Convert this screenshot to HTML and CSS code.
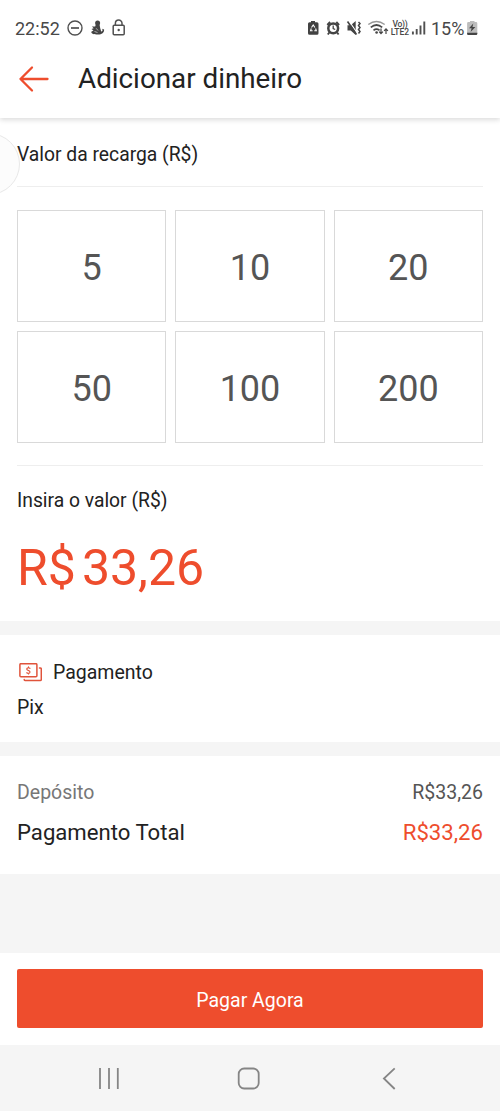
FILE: index.html
```html
<!DOCTYPE html>
<html lang="pt-BR">
<head>
<meta charset="utf-8">
<title>Adicionar dinheiro</title>
<link rel="stylesheet" href="styles.css">
</head>
<body>
<div class="screen">
  <header class="top">
    <div class="status">
      <span class="clock">22:52</span>
      <svg class="status-left" width="62" height="22" viewBox="65 17 62 22">
        <circle cx="75" cy="28" r="7" fill="none" stroke="#505050" stroke-width="1.4"/>
        <path d="M71 28h8" stroke="#505050" stroke-width="1.7"/>
        <circle cx="97.600" cy="23" r="2.500" fill="#444"/>
        <path d="M95.800 24.500h3.700l.8 4 1 3.200 1.400-1.500-.6-1.500 2 .8c.2 3.300-2.300 5.100-6 5.100-4.200 0-7-.8-6.800-2.500.1-1 1.500-1.200 2.200-1.700l-2-1.400 2.200-.8-1.800-1.600 3.300-.2z" fill="#444"/>
        <path d="M96.200 28.300l1.800 2.200M94.500 31.500l3 1" stroke="#ccc" stroke-width=".8"/>
        <rect x="113.200" y="25.200" width="11" height="9.500" rx="1" fill="none" stroke="#505050" stroke-width="1.5"/>
        <path d="M115.400 25v-1.700a3.300 3.300 0 0 1 6.600 0V25" fill="none" stroke="#505050" stroke-width="1.500"/>
        <circle cx="118.700" cy="30" r="1.200" fill="#505050"/>
      </svg>
      <svg class="status-right" width="82" height="22" viewBox="307 17 82 22">
        <path d="M311 21h4v1.200h2q1.500 0 1.500 1.500v9.500q0 1.500-1.500 1.500h-7.500q-1.500 0-1.500-1.500v-9.500q0-1.500 1.500-1.500h1.500z" fill="#424242"/>
        <path d="M311.500 27.500l1.700-2.500 1.700 2.500M315.600 28.500l.7 2.200h-2M312.600 30.700h-2l.7-2.200" fill="none" stroke="#fff" stroke-width="1.100"/>
        <circle cx="333.200" cy="28.300" r="4.900" fill="none" stroke="#444" stroke-width="2.500"/>
        <path d="M327.300 25l2.800-3M339.100 25l-2.800-3M329.300 32.500l-1.500 2M337.100 32.500l1.500 2" stroke="#444" stroke-width="1.900"/>
        <path d="M333.200 25.500v3l2 1" fill="none" stroke="#444" stroke-width="1.300"/>
        <path d="M347.500 25.300h3.200l5-4.300v14l-5-4.500h-3.200z" fill="#444"/>
        <path d="M349 21l8.500 12.500" stroke="#fff" stroke-width="1.300"/>
        <path d="M347.500 21.500l9 13" stroke="#444" stroke-width="1.600"/>
        <path d="M358.500 22l1.500 1.500-1.500 2 1.500 2-1.500 2 1.500 2-1.500 2" fill="none" stroke="#444" stroke-width="1.500"/>
        <path d="M368.300 24.500q8.200-6.200 16.400 0" fill="none" stroke="#999" stroke-width="1.500"/>
        <path d="M370.800 27.300q5.700-4.600 11.400 0M373.500 30.300q3-2.500 6 0" fill="none" stroke="#484848" stroke-width="1.700"/>
        <circle cx="376.600" cy="32.500" r="1.300" fill="#444"/>
        <path d="M381 28.500v5m-1.900-1.800 1.900 2 1.900-2M386 34v-5m-1.900 1.800 1.900-2 1.900 2" fill="none" stroke="#444" stroke-width="1.200"/>
      </svg>
      <span class="volte"><span class="vo">Vo))</span><span>LTE2</span></span>
      <svg class="signal" width="16" height="16" viewBox="411 20 16 16">
        <path d="M412.900 31.500v3M416.700 29v5.500M420.500 25.500v9M424.300 21.500v13" stroke="#505050" stroke-width="1.900"/>
      </svg>
      <span class="percent">15%</span>
      <svg class="battery" width="12" height="16" viewBox="466 20 12 16">
        <path d="M470 21h4.500v1h1.500q1.300 0 1.300 1.300v10.400q0 1.200-1.300 1.200h-7.600q-1.300 0-1.300-1.200V23.300q0-1.300 1.300-1.300h1.600z" fill="#bdbdbd"/>
        <path d="M467.100 32.800h10.200v.9q0 1.200-1.300 1.200h-7.600q-1.300 0-1.300-1.200z" fill="#444"/>
        <path d="M473.300 23.500l-4.300 4.700h2.600l-1 3.800 4.800-5h-2.900z" fill="#444"/>
      </svg>
    </div>
    <div class="title-bar">
      <svg class="back" width="32" height="28" viewBox="18 65 32 28" fill="none" stroke="#ee4d2d" stroke-width="2.300" stroke-linecap="round" stroke-linejoin="round"><path d="M47.500 79H20.500M32 67.500L20.500 79 32 90.500"/></svg>
      <h1 class="title">Adicionar dinheiro</h1>
    </div>
  </header>

  <main>
    <section class="topup">
      <span class="edge-handle"></span>
      <h2 class="label label-top">Valor da recarga (R$)</h2>
      <div class="amounts">
        <button class="amount">5</button>
        <button class="amount">10</button>
        <button class="amount">20</button>
        <button class="amount">50</button>
        <button class="amount">100</button>
        <button class="amount">200</button>
      </div>
      <h2 class="label label-value">Insira o valor (R$)</h2>
      <div class="value"><span>R$</span><span>33,26</span></div>
    </section>

    <section class="payment">
      <div class="method">
        <svg class="cash" width="24" height="20" viewBox="18 662 24 20" fill="none" stroke="#e0533b" stroke-width="1.500" stroke-linecap="round" stroke-linejoin="round">
          <rect x="19.900" y="662.700" width="17" height="13" rx="1"/>
          <path d="M39.500 667h.8q1 0 1 1v10.500q0 1-1 1H25q-.8 0-.8-1"/>
          <path d="M29.900 667.300q-1.600-1.100-2.800 0-.9 1.200.8 2l1 .5q1.600.8.700 2-1.200 1.200-2.900 0M28.500 665.900v.6M28.500 672.300v.6" stroke-width="1.200"/>
        </svg>
        <span>Pagamento</span>
      </div>
      <div class="pix">Pix</div>
    </section>

    <section class="totals">
      <div class="row deposit"><span>Depósito</span><span class="deposit-value">R$33,26</span></div>
      <div class="row total"><span>Pagamento Total</span><span class="total-value">R$33,26</span></div>
    </section>
  </main>

  <footer class="footer"><button class="pay">Pagar Agora</button></footer>
  <nav class="nav">
    <svg width="24" height="24" viewBox="97 1067 24 24" stroke="#858585" stroke-width="1.800"><path d="M100 1068v21M109 1068v21M117.800 1068v21"/></svg>
    <svg width="24" height="24" viewBox="237 1067 24 24" fill="none" stroke="#858585" stroke-width="1.800"><rect x="238.700" y="1068.500" width="20" height="20" rx="5.500"/></svg>
    <svg width="24" height="24" viewBox="377 1067 24 24" fill="none" stroke="#858585" stroke-width="1.800"><path d="M394.700 1068.300L383.900 1078.500 394.700 1089"/></svg>
  </nav>
</div>
</body>
</html>
```
FILE: styles.css
```css
* { box-sizing: border-box; }
body { margin: 0; background: #f5f5f5; font-family: Roboto, "Liberation Sans", sans-serif; color: #222; }
svg { display: block; flex: none; }
h1, h2 { margin: 0; font-weight: 400; }
button { font: inherit; margin: 0; padding: 0; }

.screen { width: 500px; height: 1111px; display: flex; flex-direction: column; overflow: hidden; }
main { flex: 1; }

.top { height: 118px; background: #fff; box-shadow: 0 2px 5px rgba(0, 0, 0, .14); position: relative; z-index: 1; }
.status { display: flex; align-items: center; height: 56px; padding: 0 22px 0 15px; color: #484848; font-size: 18px; }
.clock { width: 50px; }
.status-right { margin-left: auto; }
.volte { display: flex; flex-direction: column; align-items: center; width: 20px; margin-left: 1px; font-size: 8.500px; font-weight: 500; line-height: 8px; }
.vo { letter-spacing: -.3px; }
.signal { margin-left: 1px; }
.percent { width: 35px; margin-left: 4px; }
.title-bar { display: flex; align-items: center; height: 46px; padding-left: 18px; }
.title { margin-left: 28px; font-size: 27.800px; line-height: 32px; }

.topup { height: 503px; padding: 0 17px; background: #fff; position: relative; }
.edge-handle { position: absolute; left: -42px; top: 15px; width: 62px; height: 62px; border: 1px solid #e8e8e8; border-radius: 50%; background: #fcfcfc; }
.label { font-size: 19.300px; line-height: 24px; position: relative; }
.label-top { height: 69px; padding-top: 25px; border-bottom: 1px solid #eee; }
.amounts { display: grid; grid-template-columns: repeat(3, 1fr); grid-auto-rows: 112px; gap: 9px; height: 279px; padding-top: 23px; border-bottom: 1px solid #eee; }
.amount { border: 1px solid #d9d9d9; background: #fff; color: #555; font-size: 36px; padding-top: 3px; }
.label-value { padding-top: 23px; }
.value { display: flex; gap: 6px; margin-top: 25px; font-size: 50px; line-height: 60px; color: #ee4d2d; }

.payment { height: 107px; margin-top: 14px; padding: 26px 17px 0; background: #fff; font-size: 19.500px; line-height: 24px; }
.method { display: flex; align-items: center; gap: 11px; padding-left: 1px; }
.pix { margin-top: 11px; }

.totals { height: 118px; margin-top: 14px; padding: 25px 17px 0; background: #fff; }
.row { display: flex; justify-content: space-between; }
.deposit { font-size: 19.500px; line-height: 24px; color: #777; }
.deposit-value { color: #555; }
.total { margin-top: 13px; font-size: 22.150px; line-height: 28px; }
.total-value { color: #ee4d2d; }

.footer { height: 92px; padding: 16px 17px; background: #fff; }
.pay { display: block; width: 100%; height: 59px; border: 0; border-radius: 2px; background: #ee4d2d; color: #fff; font-size: 19.500px; padding-top: 3px; }
.nav { display: flex; gap: 116px; height: 66px; padding: 22px 97px 0; background: #f5f5f5; }
```
